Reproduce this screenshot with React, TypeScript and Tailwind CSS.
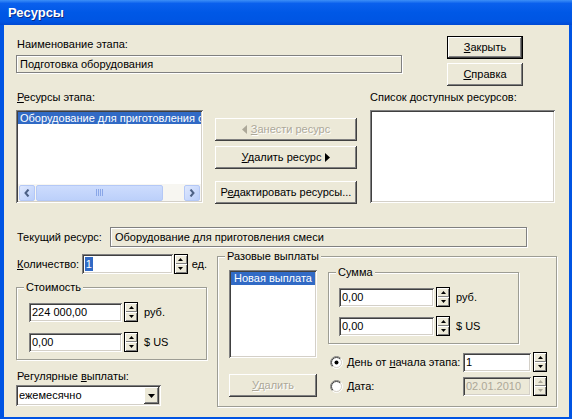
import React, { useId } from 'react';

// Classic Win32 dialog "Ресурсы" in an XP frame

const raised = 'shadow-[inset_-1px_-1px_0_#404040,inset_1px_1px_0_#ffffff,inset_-2px_-2px_0_#808080]';
const sunken = 'shadow-[inset_1px_1px_0_#808080,inset_-1px_-1px_0_#ffffff,inset_2px_2px_0_#404040,inset_-2px_-2px_0_#d4d0c8]';
const etched = 'border border-[#9d9d94] shadow-[inset_1px_1px_0_#ffffff,1px_1px_0_#ffffff]';

const U: React.FC<{ children: React.ReactNode }> = ({ children }) => <span className="underline underline-offset-[1px]">{children}</span>;

const Btn: React.FC<{ w: number; children: React.ReactNode; def?: boolean; disabled?: boolean; className?: string }> = ({ children, def, disabled, className = '' }) => (
  <div className={`h-[23px] bg-[#ece9d8] flex items-center justify-center ${def ? 'border border-black' : ''} ${className}`}>
    <div className={`w-full h-full flex items-center justify-center ${raised} ${disabled ? 'text-[#aca899] [text-shadow:1px_1px_0_#ffffff]' : ''}`}>
      {children}
    </div>
  </div>
);

const Tri: React.FC<{ dir: 'up' | 'down'; color?: string; big?: boolean }> = ({ dir, color = '#000', big }) => (
  <svg width={big ? 7 : 5} height={big ? 4 : 3} viewBox={big ? '0 0 7 4' : '0 0 5 3'}>
    {big ? (
      <polygon points={dir === 'up' ? '3.5,0 7,4 0,4' : '0,0 7,0 3.5,4'} fill={color} />
    ) : (
      <polygon points={dir === 'up' ? '2.5,0 5,3 0,3' : '0,0 5,0 2.5,3'} fill={color} />
    )}
  </svg>
);

const Spin: React.FC<{ disabled?: boolean; className?: string }> = ({ disabled, className = '' }) => {
  const c = disabled ? '#aca899' : '#000';
  return (
    <div className={`w-[14px] h-[20px] border border-black bg-[#ece9d8] flex flex-col shrink-0 ${className}`}>
      <div className="flex-1 flex items-center justify-center shadow-[inset_1px_1px_0_#ffffff,inset_-1px_-1px_0_#808080]">
        <Tri dir="up" color={c} />
      </div>
      <div className="flex-1 flex items-center justify-center shadow-[inset_1px_1px_0_#ffffff,inset_-1px_-1px_0_#808080]">
        <Tri dir="down" color={c} />
      </div>
    </div>
  );
};

const Edit: React.FC<{ w: string; value: React.ReactNode; disabled?: boolean; h?: string }> = ({ w, value, disabled, h = 'h-[19px]' }) => (
  <div className={`${w} ${h} ${sunken} ${disabled ? 'bg-[#ece9d8] text-[#aca899]' : 'bg-white'} flex items-center pl-[3px] whitespace-nowrap overflow-hidden shrink-0`}>
    {value}
  </div>
);

const Group: React.FC<{ title: string; className: string; children: React.ReactNode }> = ({ title, className, children }) => (
  <div className={`relative ${etched} ${className}`}>
    <span className="absolute -top-[7px] left-[7px] px-[2px] bg-[#ece9d8] leading-[13px]">{title}</span>
    {children}
  </div>
);

const Radio: React.FC<{ checked?: boolean }> = ({ checked }) => {
  const id = useId().replace(/:/g, '');
  return (
    <svg width="13" height="13" viewBox="0 0 13 13" className="shrink-0">
      <defs>
        <linearGradient id={`o${id}`} x1="0" y1="0" x2="1" y2="1">
          <stop offset="0.45" stopColor="#808080" />
          <stop offset="0.55" stopColor="#ffffff" />
        </linearGradient>
        <linearGradient id={`i${id}`} x1="0" y1="0" x2="1" y2="1">
          <stop offset="0.45" stopColor="#404040" />
          <stop offset="0.55" stopColor="#d4d0c8" />
        </linearGradient>
      </defs>
      <circle cx="6.5" cy="6.5" r="6" fill="none" stroke={`url(#o${id})`} strokeWidth="1" />
      <circle cx="6.5" cy="6.5" r="5" fill="#ffffff" stroke={`url(#i${id})`} strokeWidth="1" />
      {checked && <circle cx="6.5" cy="6.5" r="2" fill="#000" />}
    </svg>
  );
};

const XpArrow: React.FC<{ dir: 'left' | 'right' }> = ({ dir }) => (
  <div className="w-[16px] h-[16px] rounded-[2px] border border-[#b4c8f6] bg-[linear-gradient(135deg,#dfe8fd,#b9cefb)] flex items-center justify-center">
    <svg width="6" height="8" viewBox="0 0 6 8">
      <polyline points={dir === 'left' ? '4.5,0.5 1.5,4 4.5,7.5' : '1.5,0.5 4.5,4 1.5,7.5'} fill="none" stroke="#4d6185" strokeWidth="2" />
    </svg>
  </div>
);

export default function App() {
  return (
    <div className="w-[572px] h-[419px] bg-[#0054e3] flex flex-col overflow-hidden text-[11px] leading-[13px] text-black font-['Liberation_Sans',Arial,sans-serif]">
      <div className="h-[25px] shrink-0 flex items-center pl-[8px] bg-[linear-gradient(to_bottom,#3d8ff7_0%,#0a60ed_14%,#0058e6_50%,#0055e3_85%,#0049d4_100%)]">
        <span className="text-white font-bold text-[13px] [text-shadow:1px_1px_0_#0b2a86]">Ресурсы</span>
      </div>

      <div className="ml-[4px] mr-[3px] h-[392px] shrink-0 bg-[#ece9d8] pl-[12px] flex flex-col">
        {/* name of stage + buttons */}
        <div className="flex h-[66px] shrink-0">
          <div className="w-[386px] pt-[13px] flex flex-col">
            <div className="h-[13px] pl-[1px]">Наименование этапа:</div>
            <div className="mt-[4px] h-[18px] border border-[#808080] shadow-[1px_1px_0_#ffffff,inset_1px_1px_0_#ffffff] flex items-center pl-[3px]">
              Подготовка оборудования
            </div>
          </div>
          <div className="ml-[45px] pt-[11px] flex flex-col gap-[4px] w-[76px]">
            <Btn w={76} def><span><U>З</U>акрыть</span></Btn>
            <Btn w={76}><span><U>С</U>правка</span></Btn>
          </div>
        </div>

        {/* resources lists */}
        <div className="flex h-[113px] shrink-0">
          <div className="w-[187px] flex flex-col">
            <div className="h-[13px] pl-[1px]"><U>Р</U>есурсы этапа:</div>
            <div className={`mt-[6px] h-[93px] bg-white ${sunken} p-[2px] flex flex-col`}>
              <div className="h-[12px] bg-[#316ac5] text-white pl-[2px] whitespace-nowrap overflow-hidden leading-[12px]">
                Оборудование для приготовления смеси
              </div>
              <div className="flex-1" />
              <div className="h-[17px] bg-[#f7f6f1] flex items-center gap-[1px] px-[1px]">
                <XpArrow dir="left" />
                <div className="w-[127px] h-[16px] rounded-[2px] border border-[#b4c8f6] bg-[linear-gradient(to_bottom,#cddcfd,#bcd0fa)] flex items-center justify-center gap-[1px]">
                  <div className="w-[1px] h-[7px] bg-[#8aa7e8]" />
                  <div className="w-[1px] h-[7px] bg-[#8aa7e8]" />
                  <div className="w-[1px] h-[7px] bg-[#8aa7e8]" />
                  <div className="w-[1px] h-[7px] bg-[#8aa7e8]" />
                </div>
                <div className="flex-1" />
                <XpArrow dir="right" />
              </div>
            </div>
          </div>

          <div className="ml-[12px] w-[142px] pt-[27px] flex flex-col">
            <Btn w={142} disabled>
              <span className="flex items-center gap-[4px]">
                <svg width="5" height="9" viewBox="0 0 5 9"><polygon points="5,0 5,9 0,4.5" fill="#aca899" /></svg>
                <span><U>З</U>анести ресурс</span>
              </span>
            </Btn>
            <Btn w={142} className="mt-[5px]">
              <span className="flex items-center gap-[4px]">
                <span><U>У</U>далить ресурс</span>
                <svg width="5" height="9" viewBox="0 0 5 9"><polygon points="0,0 0,9 5,4.5" fill="#000" /></svg>
              </span>
            </Btn>
            <Btn w={142} className="mt-[12px]"><span>Р<U>е</U>дактировать ресурсы...</span></Btn>
          </div>

          <div className="ml-[13px] w-[185px] flex flex-col">
            <div className="h-[13px]">Список доступных ресурсов:</div>
            <div className={`mt-[6px] h-[93px] bg-white ${sunken}`} />
          </div>
        </div>

        {/* current resource */}
        <div className="mt-[23px] flex items-center h-[20px] shrink-0">
          <div className="w-[94px] pl-[1px]">Текущий ресурс:</div>
          <div className="w-[417px] h-[20px] border border-[#808080] shadow-[1px_1px_0_#ffffff,inset_1px_1px_0_#ffffff] flex items-center pl-[4px]">
            Оборудование для приготовления смеси
          </div>
        </div>

        {/* bottom area */}
        <div className="mt-[7px] flex shrink-0">
          <div className="w-[191px] flex flex-col">
            <div className="h-[20px] flex items-center">
              <div className="w-[68px] pl-[1px]"><U>К</U>оличество:</div>
              <Edit w="w-[91px]" h="h-[20px]" value={<span className="bg-[#316ac5] text-white px-[1px] leading-[14px]">1</span>} />
              <Spin className="ml-[1px]" />
              <span className="ml-[4px]">ед.</span>
            </div>

            <Group title="Стоимость" className="mt-[13px] h-[73px] w-[191px]">
              <div className="pt-[14px] pl-[12px] flex flex-col gap-[10px]">
                <div className="flex items-center">
                  <Edit w="w-[93px]" value="224 000,00" />
                  <Spin className="ml-[2px]" />
                  <span className="ml-[6px]">руб.</span>
                </div>
                <div className="flex items-center">
                  <Edit w="w-[93px]" value="0,00" />
                  <Spin className="ml-[2px]" />
                  <span className="ml-[6px]">$ US</span>
                </div>
              </div>
            </Group>

            <div className="mt-[10px] h-[13px] pl-[1px]">Регулярные <U>в</U>ыплаты:</div>
            <div className={`mt-[2px] w-[145px] h-[21px] bg-white ${sunken} flex items-center pl-[3px] pr-[2px]`}>
              <span className="flex-1">ежемесячно</span>
              <div className={`w-[15px] h-[17px] bg-[#ece9d8] ${raised} flex items-center justify-center`}>
                <Tri dir="down" big />
              </div>
            </div>
          </div>

          <Group title="Разовые выплаты" className="ml-[10px] mt-[2px] w-[340px] h-[151px]">
            <div className="flex pl-[11px] pt-[13px]">
              <div className="w-[88px] flex flex-col">
                <div className={`h-[88px] bg-white ${sunken} p-[2px]`}>
                  <div className="h-[13px] bg-[#316ac5] text-white pl-[3px] whitespace-nowrap overflow-hidden">Новая выплата</div>
                </div>
                <Btn w={88} disabled className="mt-[16px]"><span><U>У</U>далить</span></Btn>
              </div>

              <div className="ml-[11px] pt-[2px] flex flex-col">
                <Group title="Сумма" className="w-[191px] h-[72px]">
                  <div className="pt-[14px] pl-[10px] flex flex-col gap-[9px]">
                    <div className="flex items-center">
                      <Edit w="w-[95px]" value="0,00" />
                      <Spin className="ml-[2px]" />
                      <span className="ml-[6px]">руб.</span>
                    </div>
                    <div className="flex items-center">
                      <Edit w="w-[95px]" value="0,00" />
                      <Spin className="ml-[2px]" />
                      <span className="ml-[6px]">$ US</span>
                    </div>
                  </div>
                </Group>

                <div className="mt-[8px] flex items-center h-[20px] pl-[2px]">
                  <Radio checked />
                  <span className="ml-[4px] w-[116px]">День от <U>н</U>ачала этапа:</span>
                  <Edit w="w-[68px]" value="1" />
                  <Spin className="ml-[2px]" />
                </div>
                <div className="mt-[4px] flex items-center h-[20px] pl-[2px]">
                  <Radio />
                  <span className="ml-[4px] w-[116px]"><U>Д</U>ата:</span>
                  <Edit w="w-[68px]" value="02.01.2010" disabled />
                  <Spin className="ml-[2px]" disabled />
                </div>
              </div>
            </div>
          </Group>
        </div>
      </div>
    </div>
  );
}
